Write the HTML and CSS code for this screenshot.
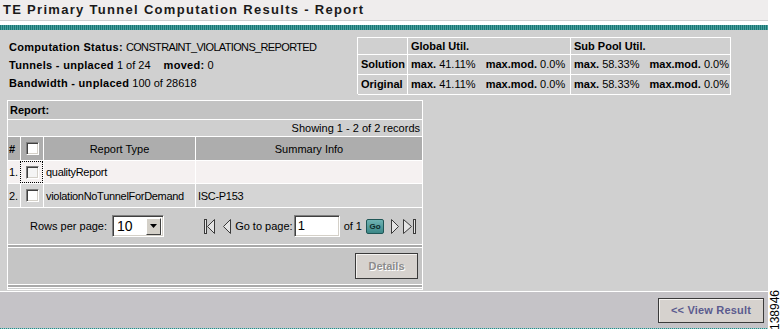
FILE: index.html
```html
<!DOCTYPE html>
<html>
<head>
<meta charset="utf-8">
<link rel="stylesheet" href="styles.css">
</head>
<body>
<div class="page">
  <div class="main">
    <div class="title">TE Primary Tunnel Computation Results - Report</div>
    <div class="teal"></div>
    <div class="content">
      <div class="top">
        <div class="stats">
          <div><b>Computation Status:</b> <span class="caps">CONSTRAINT_VIOLATIONS_REPORTED</span></div>
          <div><b>Tunnels - unplaced</b> 1 of 24 <b class="moved">moved:</b> 0</div>
          <div><b>Bandwidth - unplaced</b> 100 of 28618</div>
        </div>
        <div class="util">
          <div class="urow uhead">
            <div class="ucell c1"></div>
            <div class="ucell c2"><b>Global Util.</b></div>
            <div class="ucell c3"><b>Sub Pool Util.</b></div>
          </div>
          <div class="urow">
            <div class="ucell c1"><b>Solution</b></div>
            <div class="ucell c2"><b>max.</b> 41.11% <b class="mm">max.mod.</b> 0.0%</div>
            <div class="ucell c3"><b>max.</b> 58.33% <b class="mm">max.mod.</b> 0.0%</div>
          </div>
          <div class="urow">
            <div class="ucell c1"><b>Original</b></div>
            <div class="ucell c2"><b>max.</b> 41.11% <b class="mm">max.mod.</b> 0.0%</div>
            <div class="ucell c3"><b>max.</b> 58.33% <b class="mm">max.mod.</b> 0.0%</div>
          </div>
        </div>
      </div>

      <div class="report">
        <div class="rep-head">Report:</div>
        <div class="rep-count">Showing 1 - 2 of 2 records</div>
        <div class="grow ghead">
          <div class="gcell num"><b>#</b></div>
          <div class="gcell chk"><span class="cb"></span></div>
          <div class="gcell mid">Report Type</div>
          <div class="gcell mid">Summary Info</div>
        </div>
        <div class="grow r1">
          <div class="gcell num">1.</div>
          <div class="gcell chk focus"><span class="cb"></span></div>
          <div class="gcell txt">qualityReport</div>
          <div class="gcell txt"></div>
        </div>
        <div class="grow r2">
          <div class="gcell num">2.</div>
          <div class="gcell chk"><span class="cb"></span></div>
          <div class="gcell txt">violationNoTunnelForDemand</div>
          <div class="gcell txt">ISC-P153</div>
        </div>
        <div class="pager">
          <div class="rows">
            <span>Rows per page:</span>
            <div class="select"><span class="sel-val">10</span><span class="sel-btn"><svg width="7" height="4" viewBox="0 0 7 4"><polygon points="0,0 7,0 3.5,4" fill="#000"/></svg></span></div>
          </div>
          <div class="nav">
            <svg class="ico first" width="11" height="15" viewBox="0 0 11 15"><rect x="0.5" y="0.5" width="2" height="14" fill="#e4e4e4" stroke="#3a3a3a"/><polygon points="10.5,0.5 3.5,7.5 10.5,14.5" fill="#e4e4e4" stroke="#3a3a3a"/></svg>
            <svg class="ico prev" width="8" height="15" viewBox="0 0 8 15"><polygon points="7.5,0.5 0.5,7.5 7.5,14.5" fill="#e4e4e4" stroke="#3a3a3a"/></svg>
            <span class="goto">Go to page:</span>
            <div class="input">1</div>
            <span class="of">of 1</span>
            <span class="go">Go</span>
            <svg class="ico next" width="8" height="15" viewBox="0 0 8 15"><polygon points="0.5,0.5 7.5,7.5 0.5,14.5" fill="#e4e4e4" stroke="#3a3a3a"/></svg>
            <svg class="ico last" width="14" height="15" viewBox="0 0 14 15"><polygon points="0.5,0.5 8.5,7.5 0.5,14.5" fill="#e4e4e4" stroke="#3a3a3a"/><rect x="10.5" y="0.5" width="2" height="14" fill="#e4e4e4" stroke="#3a3a3a"/></svg>
          </div>
        </div>
        <div class="sep"></div>
        <div class="actions"><span class="btn disabled">Details</span></div>
        <div class="sep"></div>
      </div>
    </div>
    <div class="footer"><span class="btn view">&lt;&lt; View Result</span></div>
    <div class="teal-bottom"></div>
  </div>
  <div class="side"><span class="fig">138946</span></div>
</div>
</body>
</html>
```

FILE: styles.css
```css
* { box-sizing: border-box; }
html, body { margin: 0; padding: 0; }
body {
  width: 782px;
  height: 331px;
  overflow: hidden;
  background: #fff;
  font-family: "Liberation Sans", Arial, sans-serif;
  font-size: 11px;
  color: #000;
}
b { font-weight: bold; letter-spacing: 0.3px; }

.page { display: flex; height: 331px; }
.main { width: 768px; display: flex; flex-direction: column; }

.title {
  height: 21px;
  line-height: 20px;
  background: #efeded;
  border-bottom: 1px solid #cfcfcf;
  padding-left: 3px;
  font-size: 13px;
  font-weight: bold;
  letter-spacing: 1.3px;
  color: #1a1a1a;
  white-space: nowrap;
}
.teal {
  margin-top: 4px;
  height: 5px;
  background: repeating-linear-gradient(90deg, #1c7674 0 1px, #479f9d 1px 2px);
}

.content {
  height: 261px;
  background: #d0d0d0;
  padding: 7px 0 0 7px;
}
.top { display: flex; height: 57px; margin-bottom: 6px; }
.stats {
  width: 350px;
  padding: 1px 0 0 2px;
  line-height: 18px;
  white-space: nowrap;
}
.caps { letter-spacing: -0.65px; }
.moved { margin-left: 10px; }

.util {
  width: 374px;
  border-top: 1px solid #fff;
  border-left: 1px solid #fff;
}
.util b { letter-spacing: 0; }
.urow { display: flex; border-bottom: 1px solid #fff; height: 20px; line-height: 19px; }
.urow.uhead { height: 17px; line-height: 16px; }
.ucell {
  border-right: 1px solid #fff;
  padding: 0 2px 0 3px;
  white-space: nowrap;
  overflow: hidden;
}
.ucell.c1 { width: 50px; }
.ucell.c2 { width: 163px; }
.ucell.c3 { width: 160px; }
.mm { margin-left: 7px; }

.report {
  width: 416px;
  height: 190px;
  border: 1px solid #fff;
  background: #cfcfcf;
}
.rep-head {
  height: 19px;
  line-height: 18px;
  background: #c3c3c3;
  border-bottom: 1px solid #fff;
  padding-left: 2px;
  font-weight: bold;
}
.rep-count {
  height: 16px;
  line-height: 16px;
  text-align: right;
  padding-right: 2px;
  background: #cfcfcf;
}
.grow {
  display: grid;
  grid-template-columns: 12px 23px 152px 1fr;
  border-top: 1px solid #fff;
}
.ghead { height: 24px; background: #adadad; }
.r1 { height: 23px; background: #f5f1f1; }
.r2 { height: 24px; background: #d5d5d5; }
.gcell {
  display: flex;
  align-items: center;
  padding-left: 2px;
  border-left: 1px solid #fff;
  white-space: nowrap;
}
.gcell.txt { letter-spacing: -0.3px; }
.gcell.num { border-left: none; padding-left: 1px; }
.gcell.chk { justify-content: center; padding-left: 0; }
.gcell.mid { justify-content: center; padding-left: 0; }
.focus { outline: 1px dotted #000; outline-offset: -1px; }

.cb {
  width: 13px;
  height: 13px;
  background: #fff;
  border: 1px solid;
  border-color: #808080 #fff #fff #808080;
  box-shadow: inset 1px 1px #404040, inset -1px -1px #d4d0c8;
}
.r1 .cb { background: #f4f4f4; }

.pager {
  height: 37px;
  border-top: 1px solid #fff;
  background: #cbcbcb;
  display: flex;
  align-items: center;
  justify-content: space-between;
  padding: 0 5px 0 22px;
}
.rows { display: flex; align-items: center; gap: 5px; }
.select {
  width: 52px;
  height: 22px;
  display: flex;
  align-items: center;
  background: #fff;
  border: 1px solid;
  border-color: #808080 #fff #fff #808080;
  box-shadow: inset 1px 1px #404040, inset -1px -1px #d4d0c8;
  padding: 2px;
}
.sel-val { flex: 1; font-size: 14px; padding-left: 2px; line-height: 16px; }
.sel-btn {
  width: 15px;
  height: 17px;
  background: #d4d0c8;
  border: 1px solid;
  border-color: #fff #404040 #404040 #fff;
  display: flex;
  align-items: center;
  justify-content: center;
}
.nav { display: flex; align-items: center; }
.ico { display: block; }
.first { margin-right: 8px; }
.prev { margin-right: 4px; }
.goto { margin-right: 1px; }
.input {
  width: 46px;
  height: 22px;
  background: #fff;
  border: 1px solid;
  border-color: #808080 #fff #fff #808080;
  box-shadow: inset 1px 1px #404040, inset -1px -1px #d4d0c8;
  font-size: 13px;
  line-height: 19px;
  padding-left: 3px;
}
.of { margin-left: 4px; margin-right: 4px; }
.go {
  width: 18px;
  height: 15px;
  border: 1px solid #1f5656;
  border-radius: 2px;
  background: linear-gradient(#6fb3b3, #3b8787);
  color: #0e2a2a;
  font-size: 8px;
  font-weight: bold;
  display: flex;
  align-items: center;
  justify-content: center;
  margin-right: 7px;
}
.next { margin-right: 4px; }

.sep {
  height: 4px;
  border-top: 1px solid #fff;
  border-bottom: 1px solid #fff;
  background: #a9a9a9;
}
.actions {
  height: 36px;
  background: #c5c5c5;
  display: flex;
  align-items: center;
  justify-content: flex-end;
  padding-right: 4px;
}
.btn {
  display: flex;
  align-items: center;
  justify-content: center;
  background: #d6d2ce;
  border: 1px solid #3a3a3a;
  box-shadow: inset 1px 1px #f4f2f0;
  font-weight: bold;
  font-size: 11px;
}
.btn.disabled {
  width: 63px;
  height: 26px;
  color: #8c8c8c;
  text-shadow: 1px 1px #fff;
}

.footer {
  height: 37px;
  border-top: 1px solid #fff;
  background: #c5c3c7;
  display: flex;
  align-items: center;
  justify-content: flex-end;
  padding-right: 4px;
}
.btn.view {
  width: 106px;
  height: 25px;
  color: #5b5b8e;
  letter-spacing: 0.2px;
}
.teal-bottom {
  height: 3px;
  background: repeating-linear-gradient(90deg, #2a8a88 0 1px, #9fcfcd 1px 2px);
  background-size: 100% 1px;
  background-repeat: no-repeat;
}

.side {
  width: 14px;
  display: flex;
  flex-direction: column;
  justify-content: flex-end;
  align-items: center;
  padding-bottom: 1px;
}
.fig {
  writing-mode: vertical-rl;
  transform: rotate(180deg);
  font-size: 12px;
  line-height: 12px;
}
```
